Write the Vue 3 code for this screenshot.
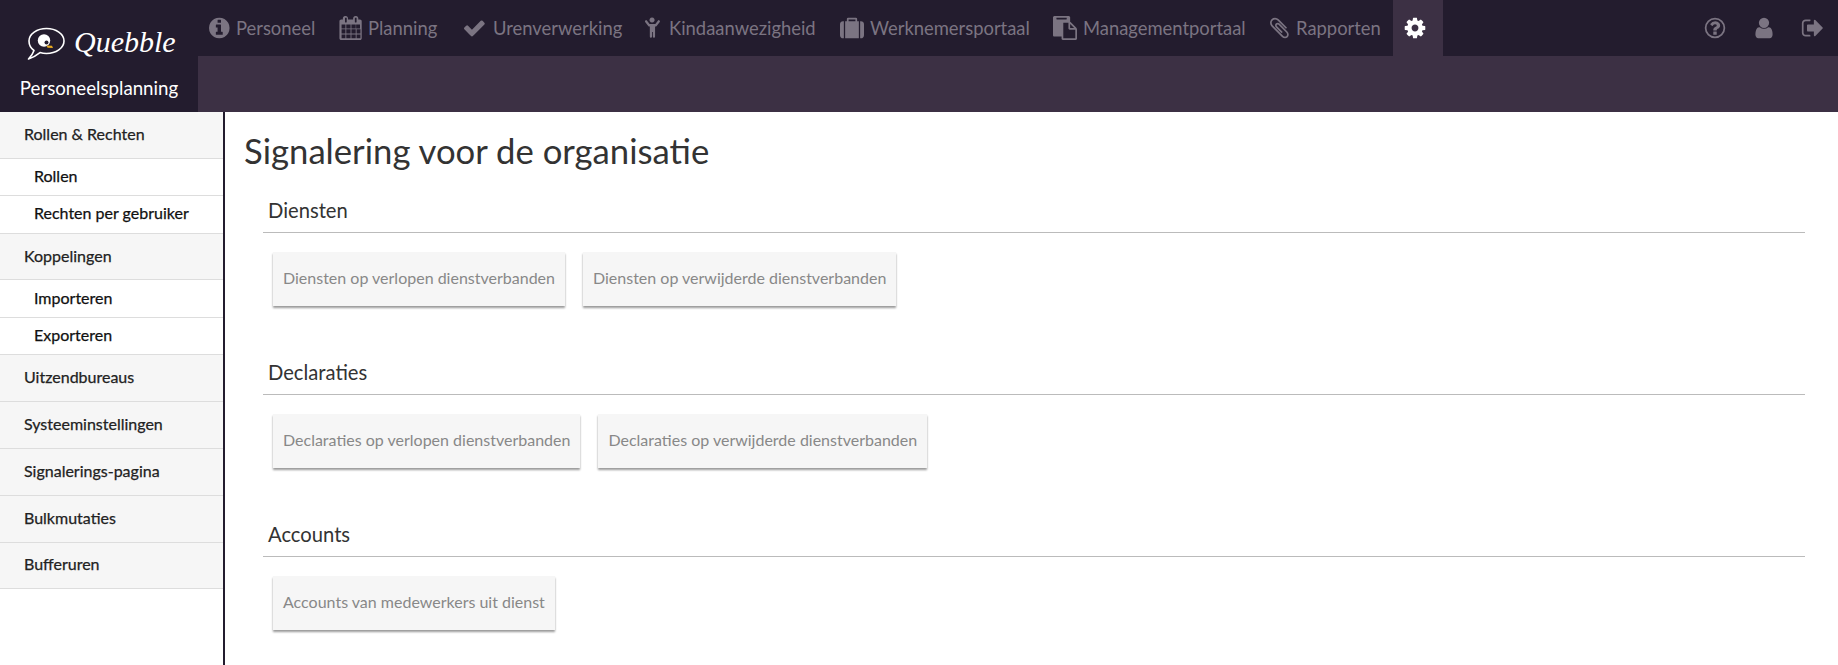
<script setup>
const P = {
  info: 'M1152 1376v-160q0-14-9-23t-23-9h-96v-512q0-14-9-23t-23-9h-320q-14 0-23 9t-9 23v160q0 14 9 23t23 9h96v320h-96q-14 0-23 9t-9 23v160q0 14 9 23t23 9h448q14 0 23-9t9-23zm-128-896v-160q0-14-9-23t-23-9h-192q-14 0-23 9t-9 23v160q0 14 9 23t23 9h192q14 0 23-9t9-23zm640 416q0 209-103 385.5t-279.5 279.5-385.5 103-385.5-103-279.5-279.5-103-385.5 103-385.5 279.5-279.5 385.5-103 385.5 103 279.5 279.5 103 385.5z',
  calendar: 'M192 1664h288v-288h-288v288zm352 0h320v-288h-320v288zm-352-352h288v-320h-288v320zm352 0h320v-320h-320v320zm-352-384h288v-288h-288v288zm736 736h320v-288h-320v288zm-384-736h320v-288h-320v288zm768 736h288v-288h-288v288zm-384-352h320v-320h-320v320zm-352-864v-288q0-13-9.5-22.5t-22.5-9.5h-64q-13 0-22.5 9.5t-9.5 22.5v288q0 13 9.5 22.5t22.5 9.5h64q13 0 22.5-9.5t9.5-22.5zm736 864h288v-320h-288v320zm-384-384h320v-288h-320v288zm352 0h288v-288h-288v288zm32-480v-288q0-13-9.5-22.5t-22.5-9.5h-64q-13 0-22.5 9.5t-9.5 22.5v288q0 13 9.5 22.5t22.5 9.5h64q13 0 22.5-9.5t9.5-22.5zm384-64v1280q0 52-38 90t-90 38h-1408q-52 0-90-38t-38-90v-1280q0-52 38-90t90-38h128v-96q0-66 47-113t113-47h64q66 0 113 47t47 113v96h384v-96q0-66 47-113t113-47h64q66 0 113 47t47 113v96h128q52 0 90 38t38 90z',
  check: 'M1671 566q0 40-28 68l-724 724-136 136q-28 28-68 28t-68-28l-136-136-362-362q-28-28-28-68t28-68l136-136q28-28 68-28t68 28l294 295 656-657q28-28 68-28t68 28l136 136q28 28 28 68z',
  child: 'M896 110a190 190 0 1 0 .1 0zM400 330q-60 50-20 110l230 300q40 50 100 50h20v740q0 90 80 90t86-90v-340h60v340q6 90 86 90t80-90v-740h20q60 0 100-50l230-300q40-60-20-110t-110 10l-200 260h-432l-200-260q-50-60-110-10z',
  suitcase: 'M640 384h512v-128h-512v128zm-352 0v1280h-64q-92 0-158-66t-66-158v-832q0-92 66-158t158-66h64zm1120 0v1280h-1024v-1280h128v-160q0-40 28-68t68-28h576q40 0 68 28t28 68v160h128zm384 224v832q0 92-66 158t-158 66h-64v-1280h64q92 0 158 66t66 158z',
  paste: 'M768 1664h896v-640h-416q-40 0-68-28t-28-68v-416h-384v1152zm256-1440v-64q0-13-9.5-22.5t-22.5-9.5h-704q-13 0-22.5 9.5t-9.5 22.5v64q0 13 9.5 22.5t22.5 9.5h704q13 0 22.5-9.5t9.5-22.5zm256 672h299l-299-299v299zm512 128v672q0 40-28 68t-68 28h-960q-40 0-68-28t-28-68v-160h-544q-40 0-68-28t-28-68v-1344q0-40 28-68t68-28h1088q40 0 68 28t28 68v328q21 13 36 28l408 408q28 28 48 76t20 88z',
  clip: 'M1596 1385q0 117-79 196t-196 79q-135 0-235-100l-777-776q-113-115-113-271 0-159 110-270t269-111q158 0 273 113l605 606q10 10 10 22 0 16-30.5 46.5t-46.5 30.5q-13 0-23-10l-606-607q-79-77-181-77-106 0-179 75t-73 181q0 105 76 181l776 777q63 63 145 63 64 0 106-42t42-106q0-82-63-145l-581-581q-26-24-60-24-29 0-48 19t-19 48q0 32 25 59l410 410q10 10 10 22 0 16-31 47t-47 31q-12 0-22-10l-410-410q-63-61-63-149 0-82 57-139t139-57q88 0 149 63l581 581q100 98 100 235z',
  cog: 'M1152 896q0-106-75-181t-181-75-181 75-75 181 75 181 181 75 181-75 75-181zm512-109v222q0 12-8 23t-20 13l-185 28q-19 54-39 91 35 50 107 138 10 12 10 25t-9 23q-27 37-99 108t-94 71q-12 0-26-9l-138-108q-44 23-91 38-16 136-29 186-7 28-36 28h-222q-14 0-24.5-8.5t-11.5-21.5l-28-184q-49-16-90-37l-141 107q-10 9-25 9-14 0-25-11-126-114-165-168-7-10-7-23 0-12 8-23 15-21 51-66.5t54-70.5q-27-50-41-99l-183-27q-13-2-21-12.5t-8-23.5v-222q0-12 8-23t19-13l186-28q14-46 39-92-40-57-107-138-10-12-10-24 0-10 9-23 26-36 98.5-107.5t94.5-71.5q13 0 26 10l138 107q44-23 91-38 16-136 29-186 7-28 36-28h222q14 0 24.5 8.5t11.5 21.5l28 184q49 16 90 37l142-107q9-9 24-9 13 0 25 10 129 119 165 170 7 8 7 22 0 12-8 23-15 21-51 66.5t-54 70.5q26 50 41 98l183 28q13 2 21 12.5t8 23.5z',
  question: 'M1024 1376v-192q0-14-9-23t-23-9h-192q-14 0-23 9t-9 23v192q0 14 9 23t23 9h192q14 0 23-9t9-23zm256-672q0-88-55.5-163t-138.5-116-170-41q-243 0-371 213-15 24 8 42l132 100q7 6 19 6 16 0 25-12 53-68 86-92 34-24 86-24 48 0 85.5 26t37.5 59q0 38-20 61t-68 45q-63 28-115.5 86.5t-52.5 125.5v36q0 14 9 23t23 9h192q14 0 23-9t9-23q0-19 21.5-49.5t54.5-49.5q32-18 49-28.5t46-35 44.5-48 28-60.5 12.5-81z',
  user: 'M1536 1399q0 109-62.5 187t-150.5 78h-854q-88 0-150.5-78t-62.5-187q0-85 8.5-160.5t31.5-152 58.5-131 94-89 134.5-34.5q131 128 313 128t313-128q76 0 134.5 34.5t94 89 58.5 131 31.5 152 8.5 160.5zm-256-887q0 159-112.5 271.5t-271.5 112.5-271.5-112.5-112.5-271.5 112.5-271.5 271.5-112.5 271.5 112.5 112.5 271.5z',
  signout: 'M704 1440q0 4 1 20t.5 26.5-3 23.5-10 19.5-20.5 6.5h-320q-119 0-203.5-84.5t-84.5-203.5v-704q0-119 84.5-203.5t203.5-84.5h320q13 0 22.5 9.5t9.5 22.5q0 4 1 20t.5 26.5-3 23.5-10 19.5-20.5 6.5h-320q-66 0-113 47t-47 113v704q0 66 47 113t113 47h288l11.5 1 11.5 3 8 5.5 7 9 2 13.5zm928-544q0 26-19 45l-544 544q-19 19-45 19t-45-19-19-45v-288h-448q-26 0-45-19t-19-45v-384q0-26 19-45t45-19h448v-288q0-26 19-45t45-19 45 19l544 544q19 19 19 45z'
}
// label, icon, glyph left edge in icon units, icon box width (px), item width (px)
const nav = [
  { label: 'Personeel', icon: 'info', x: 128, box: 27, w: 130 },
  { label: 'Planning', icon: 'calendar', x: 0, box: 29, w: 125 },
  { label: 'Urenverwerking', icon: 'check', x: 121, box: 29, w: 181 },
  { label: 'Kindaanwezigheid', icon: 'child', x: 370, box: 24, w: 195 },
  { label: 'Werknemersportaal', icon: 'suitcase', x: 0, box: 30, w: 213 },
  { label: 'Managementportaal', icon: 'paste', x: 0, box: 30, w: 217 },
  { label: 'Rapporten', icon: 'clip', x: 196, box: 26, w: 123 }
]
const side = [
  ['Rollen & Rechten', 1], ['Rollen', 0], ['Rechten per gebruiker', 0], ['Koppelingen', 1], ['Importeren', 0], ['Exporteren', 0],
  ['Uitzendbureaus', 1], ['Systeeminstellingen', 1], ['Signalerings-pagina', 1], ['Bulkmutaties', 1], ['Bufferuren', 1]
]
const sections = [
  ['Diensten', ['Diensten op verlopen dienstverbanden', 'Diensten op verwijderde dienstverbanden']],
  ['Declaraties', ['Declaraties op verlopen dienstverbanden', 'Declaraties op verwijderde dienstverbanden']],
  ['Accounts', ['Accounts van medewerkers uit dienst']]
]
</script>

<template>
  <div class="page">
    <header class="top">
      <div class="brand">
        <div class="logo">
          <svg class="bubble" viewBox="0 0 40 34" width="40" height="34">
            <path d="M7 23.500C3.500 21 2 18 2 14 2 7 10 1.500 19.500 1.500S37 7 37 14 29 26.500 19.500 26.500c-2.500 0-4.500-.3-6.500-.9-3 2.400-7 4.900-11.500 6.400C4 29.500 6 26.500 7 23.500z" fill="none" stroke="#fff" stroke-width="1.600" stroke-linejoin="round"/>
            <circle cx="17" cy="13.500" r="6.200" fill="#fff"/>
            <circle cx="19.500" cy="15.500" r="2" fill="#231c2e"/>
            <path d="M19.500 18.500l5.500 .3 1 2.200-5.500-.2z" fill="#e8a91f"/>
          </svg>
          <span class="word">Quebble</span>
        </div>
        <div class="app">Personeelsplanning</div>
      </div>
      <div class="bars">
        <div class="bar1">
          <nav class="nav">
            <a v-for="n in nav" :key="n.label" class="item" :style="{ width: n.w + 'px' }">
              <svg class="ic" :viewBox="`${n.x} 0 ${n.box * 74.67} 1792`" :style="{ width: n.box + 'px' }"><path :d="P[n.icon]"/></svg>
              <span>{{ n.label }}</span>
            </a>
            <a class="tab"><svg class="ic white" viewBox="0 0 1792 1792"><path :d="P.cog"/></svg></a>
          </nav>
          <div class="right">
            <svg class="ic" viewBox="0 0 1792 1792"><circle cx="896" cy="896" r="700" fill="none" stroke="#7b7482" stroke-width="130"/><path :d="P.question"/></svg>
            <svg class="ic" viewBox="0 0 1792 1792"><path :d="P.user"/></svg>
            <svg class="ic" viewBox="0 0 1792 1792"><path :d="P.signout"/></svg>
          </div>
        </div>
        <div class="bar2"></div>
      </div>
    </header>
    <div class="body">
      <aside class="side">
        <a v-for="s in side" :key="s[0]" :class="s[1] ? 'head' : 'sub'">{{ s[0] }}</a>
      </aside>
      <main class="main">
        <h1>Signalering voor de organisatie</h1>
        <section v-for="s in sections" :key="s[0]" class="sec">
          <h2>{{ s[0] }}</h2>
          <div class="btns">
            <a v-for="b in s[1]" :key="b" class="btn">{{ b }}</a>
          </div>
        </section>
      </main>
    </div>
  </div>
</template>

<style>
html, body { margin: 0; background: #fff; }
</style>
<style scoped>
.page { width: 1838px; height: 665px; overflow: hidden; font-family: "Lato", "Noto Sans", sans-serif; }
.top { display: flex; height: 112px; }
.brand { width: 198px; flex: none; background: #231c2e; color: #fff; display: flex; flex-direction: column; }
.logo { display: flex; align-items: flex-start; gap: 7px; padding: 27px 0 0 27px; height: 34px; }
.word { font-family: "Liberation Serif", serif; font-style: italic; font-size: 30px; line-height: 30px; color: #fff; }
.app { font-size: 18.7px; line-height: 24px; margin-top: 15px; text-align: center; }
.bars { flex: 1; display: flex; flex-direction: column; }
.bar1 { height: 56px; background: #231c2e; display: flex; justify-content: space-between; }
.bar2 { height: 56px; background: #3c3044; }
.nav { display: flex; padding-left: 11px; }
.item { display: flex; align-items: center; color: #7b7482; font-size: 18.4px; box-sizing: border-box; }
.ic { width: 24px; height: 24px; fill: #7b7482; flex: none; }
.white { fill: #fff; }
.tab { width: 50px; box-sizing: border-box; padding-left: 10px; background: #3c3044; display: flex; align-items: center; }
.right { display: flex; align-items: center; gap: 25px; padding-right: 13px; }
.body { display: flex; height: 553px; }
.side { width: 223px; flex: none; border-right: 2px solid #231c2e; display: flex; flex-direction: column; }
.head { height: 42.9px; padding: 0 0 3px 24px; border-bottom: 1px solid #ddd; background: #f6f6f6; color: #222; display: flex; align-items: center; font-size: 16px; -webkit-text-stroke: .25px #222; flex: none; }
.head:last-child { height: 42.4px; }
.sub { height: 33.35px; padding: 0 0 3px 34px; border-bottom: 1px solid #ddd; background: #fff; color: #111; display: flex; align-items: center; font-size: 16px; -webkit-text-stroke: .25px #111; flex: none; }
.main { flex: 1; padding: 0 33px 0 19px; }
h1 { margin: 17px 0 0; font-size: 34.7px; line-height: 44px; font-weight: 400; color: #333; }
.sec { margin: 0 0 0 19px; height: 162px; }
h2 { margin: 0; font-size: 20.2px; font-weight: 400; line-height: 26px; color: #333; padding: 1px 0 9px 5px; border-bottom: 1px solid #bbb; }
.sec:first-of-type { margin-top: 23px; }
.btns { display: flex; gap: 18px; padding: 19px 10px 0; }
.btn { height: 50px; padding: 0 10px 4px; display: flex; align-items: center; background: #f6f6f6; color: #888; font-size: 16px; box-shadow: 0 2px 2px rgba(0,0,0,.4); }
</style>
